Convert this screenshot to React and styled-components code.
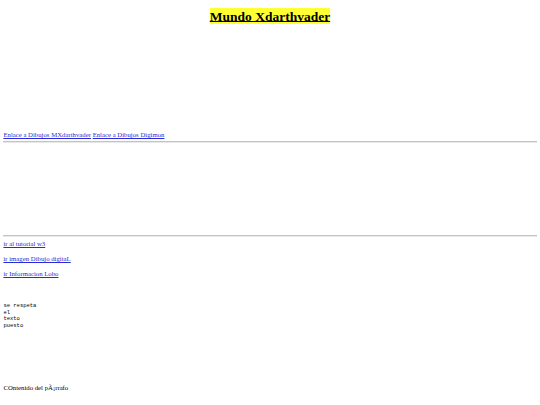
import React from "react";
import styled, { createGlobalStyle } from "styled-components";

const GlobalStyle = createGlobalStyle`
  html, body {
    margin: 0;
    padding: 0;
    background: #ffffff;
  }
  body {
    font-family: "Liberation Serif", "Times New Roman", serif;
    color: #000000;
  }
`;

const Page = styled.div`
  width: 540px;
  height: 405px;
  padding: 0 3.4px;
  box-sizing: border-box;
  overflow: hidden;
`;

const Title = styled.h1`
  margin: 0;
  padding-top: 8px;
  text-align: center;
  font-size: 13.5px;
  line-height: 16px;
  font-weight: bold;
`;

const Highlight = styled.span`
  background: #ffff33;
  text-decoration: underline;
  padding: 0.5px 0;
`;

const Spacer = styled.div`
  height: ${({ $h }) => $h}px;
`;

const LinkRow = styled.div`
  font-size: 6.75px;
  line-height: 9px;
`;

const TextLink = styled.a`
  color: #2a2ad8;
  text-decoration: underline;
`;

const Rule = styled.hr`
  margin: 0;
  border: none;
  border-top: 1px solid #c4c4c4;
  border-bottom: 1px solid #e8e8e8;
  height: 0;
`;

const Para = styled.p`
  margin: 0 0 6px;
  font-size: 6.75px;
  line-height: 9px;
`;

const Pre = styled.pre`
  margin: 0;
  font-family: "Liberation Mono", "Courier New", monospace;
  font-size: 5.5px;
  line-height: 6.5px;
`;

export default function App() {
  return (
    <>
      <GlobalStyle />
      <Page>
        <Title>
          <Highlight>Mundo Xdarthvader</Highlight>
        </Title>
        <Spacer $h={106} />
        <LinkRow>
          <TextLink href="#">Enlace a Dibujos MXdarthvader</TextLink>{" "}
          <TextLink href="#">Enlace a Dibujos Digimon</TextLink>
        </LinkRow>
        <Spacer $h={2} />
        <Rule />
        <Spacer $h={92} />
        <Rule />
        <Spacer $h={2} />
        <Para>
          <TextLink href="#">ir al tutorial w3</TextLink>
        </Para>
        <Para>
          <TextLink href="#">ir imagen Dibujo digitaL</TextLink>
        </Para>
        <Para>
          <TextLink href="#">ir Informacion Lobo</TextLink>
        </Para>
        <Spacer $h={19} />
        <Pre>{"se respeta\nel\ntexto\npuesto"}</Pre>
        <Spacer $h={54} />
        <Para>COntenido del pÃ¡rrafo</Para>
      </Page>
    </>
  );
}
